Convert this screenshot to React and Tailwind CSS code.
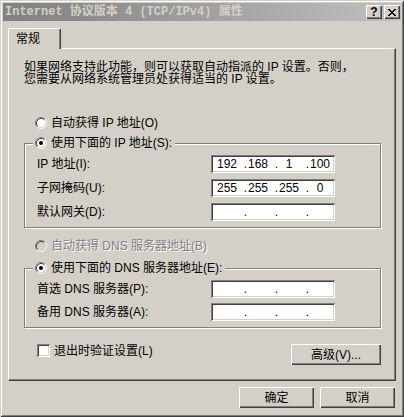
import React from 'react';

const sunken =
  'shadow-[inset_1px_1px_0_#808080,inset_-1px_-1px_0_#ffffff,inset_2px_2px_0_#404040,inset_-2px_-2px_0_#d4d0c8]';
const raised =
  'shadow-[inset_1px_1px_0_#ffffff,inset_-1px_-1px_0_#404040,inset_-2px_-2px_0_#808080]';

function Radio({ checked, disabled }) {
  return (
    <svg width="12" height="12" viewBox="0 0 12 12" className="shrink-0">
      <circle cx="6" cy="6" r="5" fill={disabled ? '#d4d0c8' : '#ffffff'} />
      <path d="M2.11 9.89A5.5 5.5 0 0 1 9.89 2.11" fill="none" stroke="#808080" />
      <path d="M9.89 2.11A5.5 5.5 0 0 1 2.11 9.89" fill="none" stroke="#ffffff" />
      <path d="M2.82 9.18A4.5 4.5 0 0 1 9.18 2.82" fill="none" stroke="#404040" />
      <path d="M9.18 2.82A4.5 4.5 0 0 1 2.82 9.18" fill="none" stroke="#d4d0c8" />
      {checked && <circle cx="6" cy="6" r="2" fill="#000000" />}
    </svg>
  );
}

function IpBox({ value }) {
  const parts = value ? value.split('.') : ['', '', '', ''];
  return (
    <div className={`flex h-[18px] w-[124px] items-center bg-white pl-[5px] font-['Liberation_Sans',sans-serif] text-[12px] leading-[12px] text-black ${sunken}`}>
      {parts.map((p, i) => (
        <React.Fragment key={i}>
          {i > 0 && <span className="w-[9px] text-right">.</span>}
          <span className="w-[22px] text-center">{p}</span>
        </React.Fragment>
      ))}
    </div>
  );
}

function Field({ label, value }) {
  return (
    <div className="flex h-[18px] items-center">
      <span className="w-[174px]">{label}</span>
      <IpBox value={value} />
    </div>
  );
}

function Group({ title, children, rowGap }) {
  return (
    <fieldset className="m-0 w-[357px] border border-[#808080] p-0 pb-[6px] shadow-[1px_1px_0_#ffffff,inset_1px_1px_0_#ffffff]">
      <legend className="ml-[8px] bg-[#d4d0c8] pl-[2px] pr-[3px]">
        <span className="flex h-[12px] items-center gap-[4px]">
          <Radio checked />
          {title}
        </span>
      </legend>
      <div className={`mt-[6px] flex flex-col pl-[12px] ${rowGap}`}>{children}</div>
    </fieldset>
  );
}

function Btn({ children, className = '' }) {
  return (
    <button className={`flex h-[21px] items-center justify-center bg-[#d4d0c8] text-black ${raised} ${className}`}>
      {children}
    </button>
  );
}

export default function App() {
  return (
    <div
      className={`flex h-[417px] w-[404px] flex-col bg-[#d4d0c8] p-[3px] font-['Liberation_Sans','Noto_Sans_CJK_SC',sans-serif] text-[12px] leading-[12px] text-black shadow-[inset_1px_1px_0_#d4d0c8,inset_-1px_-1px_0_#404040,inset_2px_2px_0_#ffffff,inset_-2px_-2px_0_#808080]`}
    >
      {/* Title bar */}
      <div className="flex h-[18px] items-center bg-linear-to-r from-[#808080] to-[#c0c0c0] pl-[2px] pr-[1px]">
        <span className="flex-1 font-['Liberation_Mono','Noto_Sans_CJK_SC',monospace] text-[12px] font-bold text-[#d4d0c8]">
          Internet 协议版本 4 (TCP/IPv4) 属性
        </span>
        <div className={`flex h-[14px] w-[16px] items-center justify-center bg-[#d4d0c8] ${raised}`}>
          <span className="font-['Liberation_Sans',sans-serif] text-[12px] font-bold leading-[12px] text-black">?</span>
        </div>
        <div className={`ml-[2px] flex h-[14px] w-[16px] items-center justify-center bg-[#d4d0c8] ${raised}`}>
          <svg width="8" height="7" viewBox="0 0 8 7" shapeRendering="crispEdges">
            <path
              fill="#000"
              d="M0 0h2v1H0zM6 0h2v1H6zM1 1h2v1H1zM5 1h2v1H5zM2 2h4v1H2zM3 3h2v1H3zM2 4h4v1H2zM1 5h2v1H1zM5 5h2v1H5zM0 6h2v1H0zM6 6h2v1H6z"
            />
          </svg>
        </div>
      </div>

      <div className="flex flex-col px-[5px]">
        {/* Tab */}
        <div className="mt-[7px] flex h-[20px]">
          <div className="relative z-10 -mb-px flex h-[21px] w-[53px] items-center rounded-tl-[2px] rounded-tr-[2px] border-l border-t border-l-white border-t-white border-r border-r-[#404040] bg-[#d4d0c8] pb-[1px] pl-[7px] shadow-[inset_-1px_0_0_#808080]">
            常规
          </div>
        </div>

        {/* Panel */}
        <div className="flex h-[333px] flex-col border border-l-white border-t-white border-r-[#404040] border-b-[#404040] pl-[15px] pt-[12px] shadow-[inset_-1px_-1px_0_#808080]">
          <p>
            如果网络支持此功能，则可以获取自动指派的 IP 设置。否则，
            <br />
            您需要从网络系统管理员处获得适当的 IP 设置。
          </p>

          <div className="ml-[11px] mt-[32px] flex h-[12px] items-center gap-[4px]">
            <Radio />
            自动获得 IP 地址(O)
          </div>

          <div className="mt-[8px]">
            <Group title="使用下面的 IP 地址(S):" rowGap="gap-[6px]">
              <Field label="IP 地址(I):" value="192.168.1.100" />
              <Field label="子网掩码(U):" value="255.255.255.0" />
              <Field label="默认网关(D):" />
            </Group>
          </div>

          <div className="ml-[11px] mt-[12px] flex h-[12px] items-center gap-[4px] text-[#808080] [text-shadow:1px_1px_0_#ffffff]">
            <Radio disabled />
            自动获得 DNS 服务器地址(B)
          </div>

          <div className="mt-[10px]">
            <Group title="使用下面的 DNS 服务器地址(E):" rowGap="gap-[5px]">
              <Field label="首选 DNS 服务器(P):" />
              <Field label="备用 DNS 服务器(A):" />
            </Group>
          </div>

          <div className="mt-[16px] flex w-[357px] items-start justify-between">
            <div className="ml-[13px] flex h-[13px] items-center gap-[4px]">
              <span className={`h-[13px] w-[13px] bg-white ${sunken}`} />
              退出时验证设置(L)
            </div>
            <Btn className="w-[90px]">高级(V)...</Btn>
          </div>
        </div>

        {/* Dialog buttons */}
        <div className="mt-[6px] flex justify-end gap-[6px] pr-[1px]">
          <Btn className="w-[75px]">确定</Btn>
          <Btn className="w-[75px]">取消</Btn>
        </div>
      </div>
    </div>
  );
}
